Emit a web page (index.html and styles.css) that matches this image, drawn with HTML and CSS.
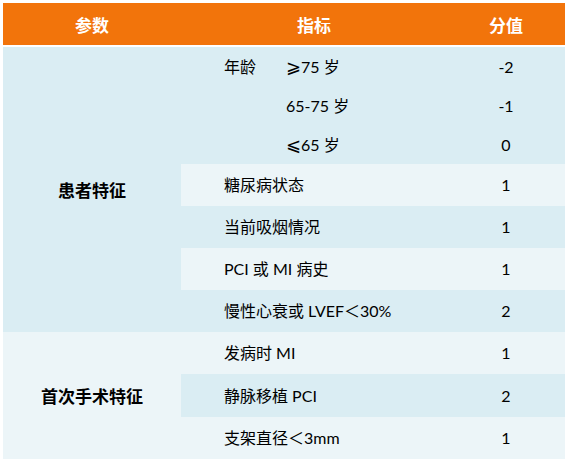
FILE: index.html
```html
<!DOCTYPE html>
<html lang="zh-CN">
<head>
<meta charset="utf-8">
<title>评分表</title>
<link rel="stylesheet" href="styles.css">
</head>
<body>
<table class="score-table">
  <colgroup>
    <col class="col-param">
    <col class="col-index">
    <col class="col-score">
  </colgroup>
  <thead>
    <tr class="head-row">
      <th>参数</th>
      <th>指标</th>
      <th>分值</th>
    </tr>
  </thead>
  <tbody>
    <tr class="row-age band-dark">
      <td class="group band-dark" rowspan="7">患者特征</td>
      <td class="index"><span class="age-label">年龄</span><span><span class="sym">⩾</span>75 岁</span></td>
      <td class="score">-2</td>
    </tr>
    <tr class="row-age band-dark">
      <td class="index"><span class="age-label"></span><span>65-75 岁</span></td>
      <td class="score">-1</td>
    </tr>
    <tr class="row-age band-dark">
      <td class="index"><span class="age-label"></span><span><span class="sym">⩽</span>65 岁</span></td>
      <td class="score">0</td>
    </tr>
    <tr class="row band-light">
      <td class="index">糖尿病状态</td>
      <td class="score">1</td>
    </tr>
    <tr class="row band-dark">
      <td class="index">当前吸烟情况</td>
      <td class="score">1</td>
    </tr>
    <tr class="row band-light">
      <td class="index">PCI 或 MI 病史</td>
      <td class="score">1</td>
    </tr>
    <tr class="row band-dark">
      <td class="index">慢性心衰或 LVEF＜30%</td>
      <td class="score">2</td>
    </tr>
    <tr class="row band-light">
      <td class="group band-light" rowspan="3">首次手术特征</td>
      <td class="index">发病时 MI</td>
      <td class="score">1</td>
    </tr>
    <tr class="row row-tall band-dark">
      <td class="index">静脉移植 PCI</td>
      <td class="score">2</td>
    </tr>
    <tr class="row band-light">
      <td class="index">支架直径＜3mm</td>
      <td class="score">1</td>
    </tr>
  </tbody>
</table>
</body>
</html>
```

FILE: styles.css
```css
html, body {
  margin: 0;
  padding: 0;
  background: #ffffff;
}

body {
  padding: 3px;
  font-family: "Lato", "Noto Sans CJK SC", "DejaVu Sans", sans-serif;
  font-size: 16px;
  color: #000000;
}

.score-table {
  width: 562px;
  border-collapse: separate;
  border-spacing: 0;
  table-layout: fixed;
}

.col-param { width: 178px; }
.col-index { width: 266px; }
.col-score { width: 118px; }

.head-row th {
  height: 42px;
  padding: 0;
  background: #f2740b;
  color: #ffffff;
  font-family: "Noto Sans CJK SC", sans-serif;
  font-weight: bold;
  font-size: 17px;
  text-align: center;
  border-bottom: 2px solid #ffffff;
  line-height: 1;
}

.head-row th:nth-child(2) {
  text-align: left;
  padding-left: 116px;
}

td {
  padding: 0;
  line-height: 1;
  vertical-align: middle;
}

.row-age td { height: 39px; }
.row td { height: 42px; }
.row-tall td { height: 43px; }

.band-dark { background: #daedf3; }
.band-light { background: #ecf5f8; }

.group {
  text-align: center;
  font-family: "Noto Sans CJK SC", sans-serif;
  font-weight: bold;
  font-size: 17px;
}

.index {
  padding-left: 43px;
  white-space: nowrap;
}

.age-label {
  display: inline-block;
  width: 62px;
}

.sym {
  font-family: "DejaVu Sans", sans-serif;
  font-size: 18px;
  line-height: 1;
}

.score {
  text-align: center;
}
```
